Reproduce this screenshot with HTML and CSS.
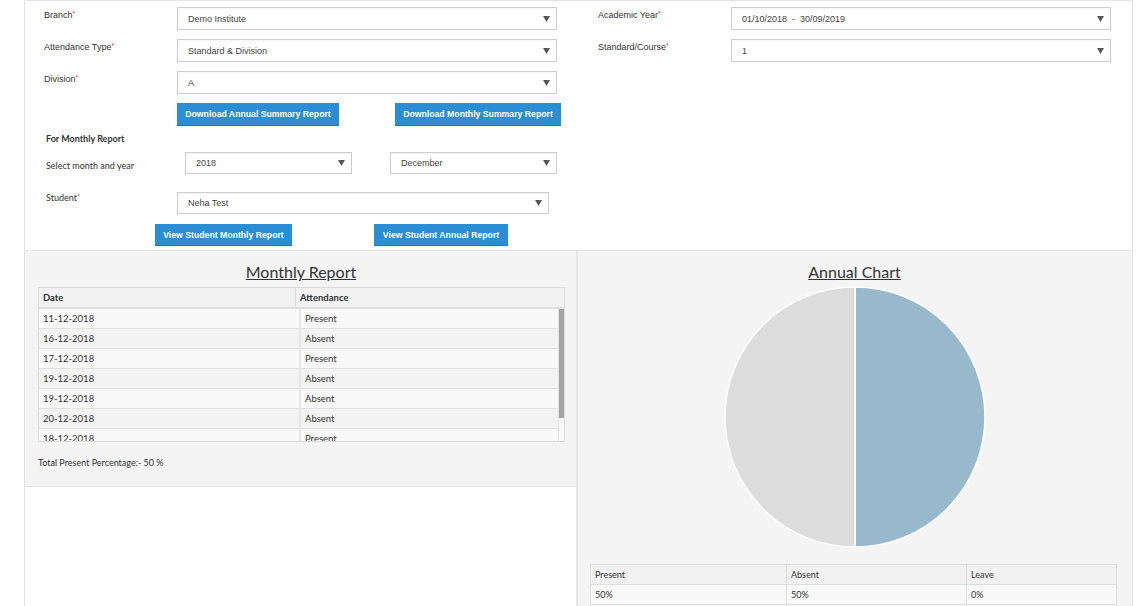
FILE: index.html
```html
<!DOCTYPE html>
<html lang="en">
<head>
    <meta charset="UTF-8">
    <meta name="viewport" content="width=device-width, initial-scale=1.0">
    <title>Attendance Report</title>
    <link rel="stylesheet" href="styles.css">
</head>
<body>
<div class="page">
    <section class="filters">
        <div class="filter-col">
            <div class="field-row">
                <label class="field-label">Branch<span class="req">*</span></label>
                <div class="select-box wide"><span>Demo Institute</span><svg class="caret" viewBox="0 0 8 7"><path d="M0 0h8L4 7z"/></svg></div>
            </div>
            <div class="field-row">
                <label class="field-label">Attendance Type<span class="req">*</span></label>
                <div class="select-box wide"><span>Standard &amp; Division</span><svg class="caret" viewBox="0 0 8 7"><path d="M0 0h8L4 7z"/></svg></div>
            </div>
            <div class="field-row">
                <label class="field-label">Division<span class="req">*</span></label>
                <div class="select-box wide"><span>A</span><svg class="caret" viewBox="0 0 8 7"><path d="M0 0h8L4 7z"/></svg></div>
            </div>
            <div class="button-row download-row">
                <button class="btn btn-annual-summary">Download Annual Summary Report</button>
                <button class="btn btn-monthly-summary">Download Monthly Summary Report</button>
            </div>

            <h4 class="sub-heading">For Monthly Report</h4>
            <div class="month-row">
                <label class="month-label">Select month and year</label>
                <div class="select-box short"><span>2018</span><svg class="caret" viewBox="0 0 8 7"><path d="M0 0h8L4 7z"/></svg></div>
                <div class="select-box short month-select"><span>December</span><svg class="caret" viewBox="0 0 8 7"><path d="M0 0h8L4 7z"/></svg></div>
            </div>
            <div class="student-row">
                <label class="student-label">Student<span class="req">*</span></label>
                <div class="select-box student"><span>Neha Test</span><svg class="caret" viewBox="0 0 8 7"><path d="M0 0h8L4 7z"/></svg></div>
            </div>
            <div class="button-row view-row">
                <button class="btn btn-view-monthly">View Student Monthly Report</button>
                <button class="btn btn-view-annual">View Student Annual Report</button>
            </div>
        </div>

        <div class="filter-col">
            <div class="field-row">
                <label class="field-label">Academic Year<span class="req">*</span></label>
                <div class="select-box wide"><span>01/10/2018 &nbsp;- &nbsp;30/09/2019</span><svg class="caret" viewBox="0 0 8 7"><path d="M0 0h8L4 7z"/></svg></div>
            </div>
            <div class="field-row">
                <label class="field-label">Standard/Course<span class="req">*</span></label>
                <div class="select-box wide"><span>1</span><svg class="caret" viewBox="0 0 8 7"><path d="M0 0h8L4 7z"/></svg></div>
            </div>
        </div>
    </section>

    <div class="reports">
        <div class="left-side">
            <div class="panel monthly-panel">
                <h3 class="panel-title">Monthly Report</h3>
                <div class="report-table">
                    <table class="head-table">
                        <tr><th class="date-col">Date</th><th>Attendance</th></tr>
                    </table>
                    <div class="table-body">
                        <div class="table-scroll">
                            <table class="body-table">
                                <tr><td class="date-col">11-12-2018</td><td>Present</td></tr>
                                <tr><td class="date-col">16-12-2018</td><td>Absent</td></tr>
                                <tr><td class="date-col">17-12-2018</td><td>Present</td></tr>
                                <tr><td class="date-col">19-12-2018</td><td>Absent</td></tr>
                                <tr><td class="date-col">19-12-2018</td><td>Absent</td></tr>
                                <tr><td class="date-col">20-12-2018</td><td>Absent</td></tr>
                                <tr><td class="date-col">18-12-2018</td><td>Present</td></tr>
                            </table>
                        </div>
                        <div class="scrollbar"><div class="scrollbar-thumb"></div></div>
                    </div>
                </div>
                <p class="total">Total Present Percentage:- 50 %</p>
            </div>
        </div>

        <div class="panel annual-panel">
            <h3 class="panel-title">Annual Chart</h3>
            <svg class="pie" width="264" height="264" viewBox="0 0 264 264">
                <path d="M132 132 L132 2 A130 130 0 0 1 132 262 Z" fill="#98b9cc" stroke="#fff" stroke-width="1.5"/>
                <path d="M132 132 L132 262 A130 130 0 0 1 132 2 Z" fill="#dcdcdc" stroke="#fff" stroke-width="1.5"/>
            </svg>
            <table class="summary-table">
                <tr><th class="c1">Present</th><th class="c2">Absent</th><th>Leave</th></tr>
                <tr><td>50%</td><td>50%</td><td>0%</td></tr>
            </table>
        </div>
    </div>
</div>
</body>
</html>
```

FILE: styles.css
```css
body {
    margin: 0;
    padding: 0;
    font-family: "Liberation Sans", Arial, sans-serif;
    background-color: #fff;
    color: #333;
    overflow: hidden;
}

.page {
    margin-left: 24px;
    width: 1107px;
    height: 605px;
    border: 1px solid #e3e3e3;
    border-bottom: none;
}

/* ---- filter form ---- */

.filters {
    display: grid;
    grid-template-columns: 554px 553px;
    height: 249px;
    border-bottom: 1px solid #e3e3e3;
}

.filter-col {
    padding: 6px 0 0 19px;
}

.field-row {
    display: flex;
    align-items: flex-start;
    margin-bottom: 9px;
}

.field-label {
    width: 133px;
    font-size: 9px;
    line-height: 12px;
    padding-top: 2px;
    color: #333;
}

.req {
    color: #e0352b;
    font-size: 7px;
    vertical-align: top;
    position: relative;
    top: -1px;
}

.select-box {
    box-sizing: border-box;
    height: 23px;
    border: 1px solid #cdcdcd;
    box-shadow: inset 0 1px 1px rgba(0, 0, 0, 0.04);
    background: #fff;
    display: flex;
    align-items: center;
    justify-content: space-between;
    padding: 0 6px 0 10px;
    font-size: 9px;
    color: #444;
}

.select-box.wide {
    width: 380px;
}

.select-box.short {
    width: 167px;
    height: 22px;
}

.select-box.student {
    width: 372px;
    height: 22px;
}

.caret {
    width: 7px;
    height: 6px;
    fill: #555;
}

.button-row {
    display: flex;
}

.btn {
    box-sizing: border-box;
    height: 23px;
    border: none;
    border-bottom: 1px solid #1f74b3;
    background-color: #2b8dd3;
    color: #fff;
    font-family: "Liberation Sans", Arial, sans-serif;
    font-weight: bold;
    font-size: 8.7px;
    padding: 0;
    cursor: pointer;
}

.download-row {
    padding-left: 133px;
}

.btn-annual-summary {
    width: 162px;
}

.btn-monthly-summary {
    width: 166px;
    margin-left: 56px;
}

.sub-heading {
    margin: 7px 0 7px 2px;
    font-family: Lato, sans-serif;
    font-size: 9px;
    line-height: 12px;
    font-weight: bold;
    color: #333;
}

.month-row {
    display: flex;
    align-items: center;
    padding-left: 2px;
}

.month-label {
    width: 139px;
    font-family: Lato, sans-serif;
    font-size: 9px;
    padding-top: 4px;
}

.month-select {
    margin-left: 38px;
}

.student-row {
    display: flex;
    align-items: flex-start;
    margin-top: 18px;
    padding-left: 2px;
}

.student-label {
    width: 131px;
    font-family: Lato, sans-serif;
    font-size: 9px;
    line-height: 12px;
}

.view-row {
    margin-top: 10px;
    padding-left: 111px;
}

.view-row .btn {
    height: 22px;
}

.btn-view-monthly {
    width: 137px;
}

.btn-view-annual {
    width: 134px;
    margin-left: 82px;
}

/* ---- report panels ---- */

.reports {
    display: grid;
    grid-template-columns: 553px 554px;
}

.left-side {
    border-right: 2px solid #e6e6e6;
}

.panel {
    background-color: #f4f4f4;
    font-family: Lato, sans-serif;
}

.monthly-panel {
    height: 236px;
    padding: 11px 12px 0 13px;
    box-sizing: border-box;
    border-bottom: 1px solid #e3e3e3;
}

.annual-panel {
    height: 356px;
    padding: 11px 13px 0 12px;
    box-sizing: border-box;
    text-align: center;
}

.panel-title {
    margin: 0 0 5px;
    text-align: center;
    font-size: 16px;
    line-height: 20px;
    font-weight: normal;
    text-decoration: underline;
    color: #333;
}

.report-table {
    width: 527px;
    border: 1px solid #dcdcdc;
    box-sizing: border-box;
}

.report-table table {
    width: 100%;
    border-collapse: collapse;
    table-layout: fixed;
    font-size: 9.5px;
    color: #333;
}

.head-table th {
    height: 19px;
    text-align: left;
    font-weight: bold;
    background: #f2f2f2;
    padding: 0 4px;
    border-bottom: 2px solid #e0e0e0;
}

.head-table .date-col {
    width: 248px;
    border-right: 1px solid #dcdcdc;
}

/* rows area with its own slim scrollbar */
.table-body {
    display: flex;
    height: 132px;
    background: #fff;
}

.table-scroll {
    flex: 1;
    overflow: hidden;
}

.scrollbar {
    width: 5px;
    background: #fafafa;
    border-left: 1px solid #e3e3e3;
}

.scrollbar-thumb {
    height: 109px;
    background: #a3a3a3;
}

.body-table td {
    height: 19px;
    padding: 0 4px;
    border-bottom: 1px solid #e1e1e1;
}

.body-table .date-col {
    width: 252px;
    border-right: 2px solid #e6e6e6;
}

.body-table tr:nth-child(odd) td {
    background: #f9f9f9;
}

.body-table tr:nth-child(even) td {
    background: #f3f3f3;
}

.total {
    margin: 15px 0 0;
    font-size: 9px;
    line-height: 12px;
    color: #333;
}

.pie {
    display: block;
    margin: 0 auto;
    position: relative;
    top: -2px;
}

.summary-table {
    width: 527px;
    margin-top: 13px;
    border-collapse: collapse;
    table-layout: fixed;
    text-align: left;
    font-size: 9px;
    color: #333;
}

.summary-table th,
.summary-table td {
    height: 19px;
    padding: 0 4px;
    border: 1px solid #dedede;
    font-weight: normal;
}

.summary-table th {
    background: #f2f2f2;
}

.summary-table td {
    background: #f9f9f9;
}

.summary-table .c1 {
    width: 187px;
}

.summary-table .c2 {
    width: 171px;
}
```
